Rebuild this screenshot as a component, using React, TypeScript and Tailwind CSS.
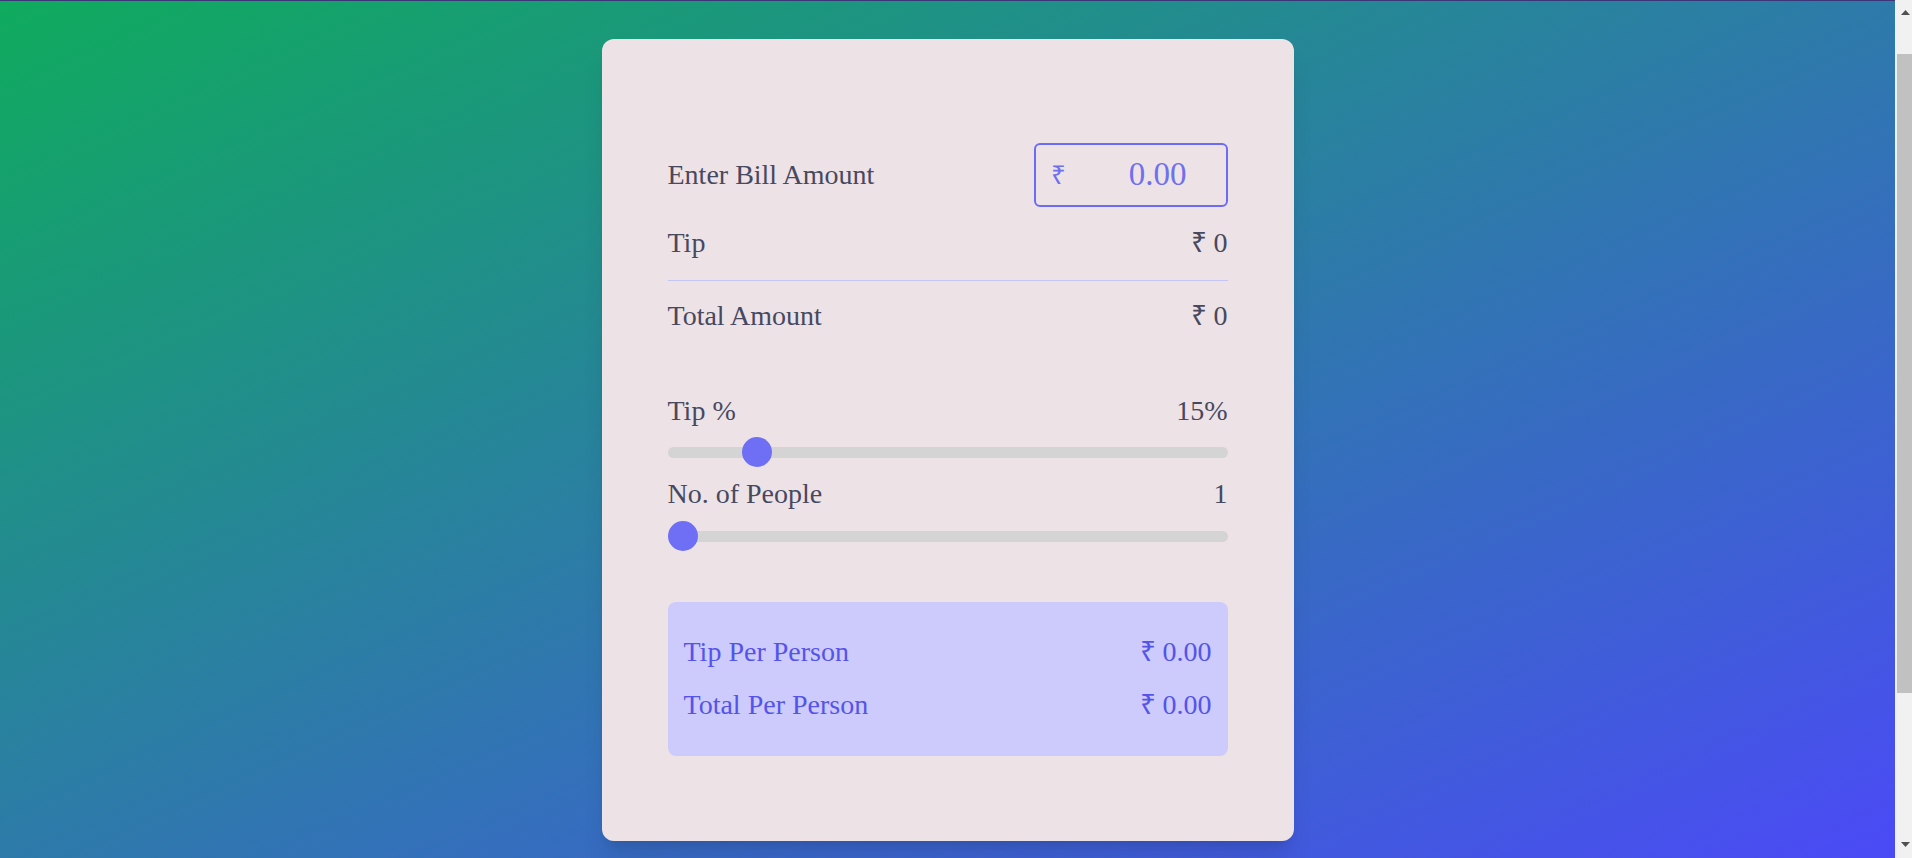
import { useState } from 'react';

/* Tip calculator card on a gradient page */
const serif = "font-['Liberation_Serif','Times_New_Roman',serif]";

function Row({ label, value }: { label: string; value: string }) {
  return (
    <div className="flex items-center justify-between leading-[32px]">
      <span>{label}</span>
      <span>{value}</span>
    </div>
  );
}

function Slider({ min, max, value, onChange }: { min: number; max: number; value: number; onChange: (v: number) => void }) {
  return (
    <div className="flex h-[30px] items-center">
      <input
        type="range"
        min={min}
        max={max}
        value={value}
        onChange={(e) => onChange(Number(e.target.value))}
        className="h-[11px] w-full cursor-pointer appearance-none rounded-full bg-[#d4d4d4] outline-none [&::-webkit-slider-thumb]:h-[30px] [&::-webkit-slider-thumb]:w-[30px] [&::-webkit-slider-thumb]:appearance-none [&::-webkit-slider-thumb]:rounded-full [&::-webkit-slider-thumb]:bg-[#6f6ff5]"
      />
    </div>
  );
}

/* classic page scrollbar, page scrolled a little */
function Scrollbar() {
  return (
    <div className="flex w-[17px] shrink-0 flex-col bg-[#f1f1f1]">
      <div className="flex h-[17px] items-end justify-center pb-[1px] pl-[3px]">
        <svg width="9" height="6" viewBox="0 0 9 6"><path d="M4.5 0L9 5H0z" fill="#505050" /></svg>
      </div>
      <div className="flex-1 pt-[37px] pl-[2px]">
        <div className="h-[639px] bg-[#c1c1c1]" />
      </div>
      <div className="flex h-[17px] items-start justify-center pt-[1px] pl-[3px]">
        <svg width="9" height="6" viewBox="0 0 9 6"><path d="M0 0H9L4.5 5z" fill="#505050" /></svg>
      </div>
    </div>
  );
}

export default function App() {
  const [bill, setBill] = useState('');
  const [tipPct, setTipPct] = useState(15);
  const [people, setPeople] = useState(1);

  const amount = parseFloat(bill) || 0;
  const tip = (amount * tipPct) / 100;
  const total = amount + tip;
  const fmt = (n: number) => (n === 0 ? '0' : n.toFixed(2));

  return (
    <div className={`flex h-screen overflow-hidden ${serif}`}>
      <main className="flex flex-1 justify-center border-t border-[#3c3577] bg-[linear-gradient(to_bottom_right,#0fab5d,#4b4af6)] pt-[38px]">
        <div className="h-fit w-[692px] rounded-xl bg-[#ede3e6] px-[66px] pt-[104px] pb-[85px] text-[28px] text-[#48485f] shadow-xl">
          {/* Bill input */}
          <div className="flex h-[64px] items-center justify-between">
            <span className="leading-[32px]">Enter Bill Amount</span>
            <div className="flex h-[64px] w-[194px] items-center rounded-md border-2 border-[#6b6bf6] pl-[15px] pr-[39px] text-[#7070ee]">
              <span className="text-[26px]">₹</span>
              <input
                value={bill}
                onChange={(e) => setBill(e.target.value)}
                placeholder="0.00"
                className="min-w-0 flex-1 bg-transparent text-right text-[33px] text-[#7070ee] outline-none placeholder:text-[#7070ee]"
              />
            </div>
          </div>

          <div className="mt-5">
            <Row label="Tip" value={`₹ ${fmt(tip)}`} />
          </div>
          <div className="mt-[21px] mb-[19px] h-px bg-[#c6c6f6]" />
          <Row label="Total Amount" value={`₹ ${fmt(total)}`} />

          {/* Sliders */}
          <div className="mt-[63px]">
            <Row label="Tip %" value={`${tipPct}%`} />
          </div>
          <div className="mt-[10px]">
            <Slider min={1} max={100} value={tipPct} onChange={setTipPct} />
          </div>
          <div className="mt-[11px]">
            <Row label="No. of People" value={`${people}`} />
          </div>
          <div className="mt-[11px]">
            <Slider min={1} max={20} value={people} onChange={setPeople} />
          </div>

          {/* Per person */}
          <div className="mt-[51px] flex flex-col gap-[21px] rounded-lg bg-[#cdcbfb] px-4 pt-[34px] pb-[35px] text-[#5454ea]">
            <Row label="Tip Per Person" value={`₹ ${(tip / people).toFixed(2)}`} />
            <Row label="Total Per Person" value={`₹ ${(total / people).toFixed(2)}`} />
          </div>
        </div>
      </main>
      <Scrollbar />
    </div>
  );
}
